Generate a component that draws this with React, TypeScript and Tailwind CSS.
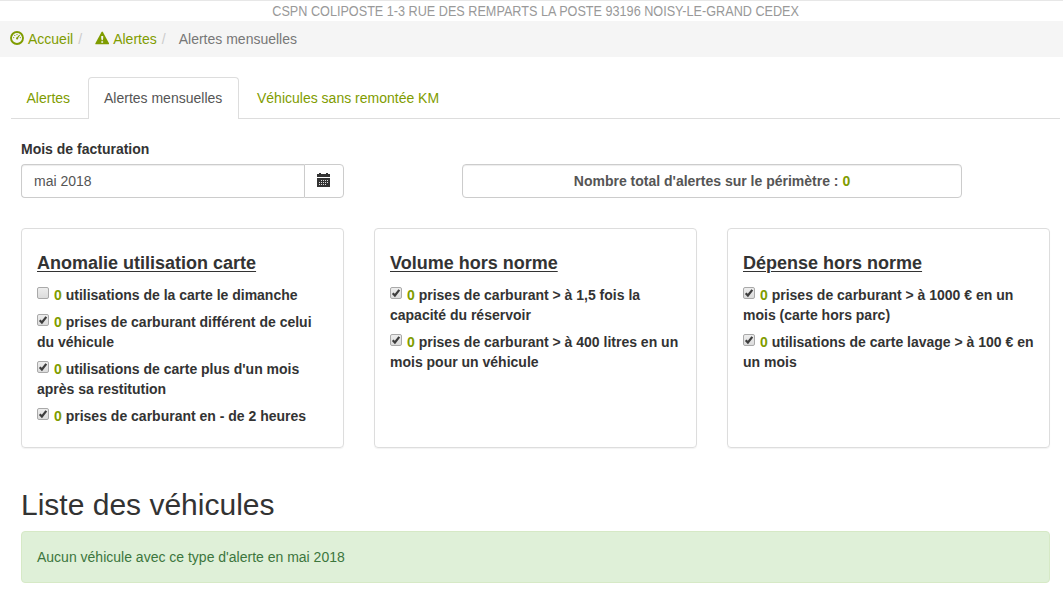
import { useState, type ReactNode } from "react";

type Alerte = { id: string; texte: string; coche: boolean };
type Groupe = { titre: string; alertes: Alerte[] };

const GROUPES: Groupe[] = [
  {
    titre: "Anomalie utilisation carte",
    alertes: [
      { id: "dimanche", texte: "utilisations de la carte le dimanche", coche: false },
      { id: "carburant", texte: "prises de carburant différent de celui du véhicule", coche: true },
      { id: "restitution", texte: "utilisations de carte plus d'un mois après sa restitution", coche: true },
      { id: "deux-heures", texte: "prises de carburant en - de 2 heures", coche: true },
    ],
  },
  {
    titre: "Volume hors norme",
    alertes: [
      { id: "reservoir", texte: "prises de carburant > à 1,5 fois la capacité du réservoir", coche: true },
      { id: "litres", texte: "prises de carburant > à 400 litres en un mois pour un véhicule", coche: true },
    ],
  },
  {
    titre: "Dépense hors norme",
    alertes: [
      { id: "hors-parc", texte: "prises de carburant > à 1000 € en un mois (carte hors parc)", coche: true },
      { id: "lavage", texte: "utilisations de carte lavage > à 100 € en un mois", coche: true },
    ],
  },
];

function DashboardIcon() {
  return (
    <svg width="14" height="14" viewBox="0 0 14 14" className="-mt-0.5 -ml-px shrink-0" aria-hidden="true">
      <circle cx="7" cy="7" r="6" fill="none" stroke="#7f9c00" strokeWidth="1.9" />
      <g fill="#7f9c00">
        <circle cx="3.7" cy="6.6" r=".6" />
        <circle cx="4.8" cy="4.4" r=".6" />
        <circle cx="7" cy="3.6" r=".6" />
        <circle cx="10.3" cy="6.6" r=".6" />
        <path d="M9.2 3.7l.9.6-2 2.6a1.1 1.1 0 1 1-1-.6z" />
      </g>
    </svg>
  );
}

function WarningIcon() {
  return (
    <svg width="14" height="14" viewBox="0 0 14 14" className="-mt-0.5 shrink-0" aria-hidden="true">
      <path d="M6.4 1.2Q7.2 0 8 1.2L14 12.2Q14.4 13.3 13.4 13.3H1Q0 13.3.4 12.2Z" fill="#7f9c00" />
      <path d="M6.2 5h2v2.2L7.7 9.2h-1L6.2 7.2zM6.3 10.2h1.8v1.6H6.3z" fill="#f5f5f5" />
    </svg>
  );
}

function CalendarIcon() {
  return (
    <svg width="14" height="14" viewBox="0 0 14 14" shapeRendering="crispEdges" aria-hidden="true">
      <path d="M0 1h2V0h2v1h5V0h2v1h2v3H0zM0 5h13v9H0z" fill="#333" />
      <path
        d="M4 7h1v1H4zM6 7h1v1H6zM8 7h1v1H8zM10 7h1v1h-1zM2 9h1v1H2zM4 9h1v1H4zM6 9h1v1H6zM8 9h1v1H8zM10 9h1v1h-1zM2 11h1v1H2zM4 11h1v1H4zM6 11h1v1H6zM8 11h1v1H8z"
        fill="#ddd"
      />
    </svg>
  );
}

function CheckBox({ checked, onChange }: { checked: boolean; onChange: () => void }) {
  return (
    <span className="mr-1 inline-grid h-[13px] w-[13px] align-[1px]">
      <input
        type="checkbox"
        checked={checked}
        onChange={onChange}
        className="col-start-1 row-start-1 m-0 h-3 w-3 appearance-none rounded-[2px] border border-[#a9a9a9] bg-linear-to-b from-[#ededed] to-[#dcdcdc]"
      />
      {checked && (
        <svg viewBox="0 0 12 12" className="pointer-events-none col-start-1 row-start-1 h-3 w-3" aria-hidden="true">
          <path d="M2.7 6.2L4.9 8.5L9.3 2.9" fill="none" stroke="#3d3d3d" strokeWidth="2.2" />
        </svg>
      )}
    </span>
  );
}

function Fil({ children, icon }: { children: ReactNode; icon: ReactNode }) {
  return (
    <a href="#" className="flex items-center gap-1 text-[#7f9c00]">
      {icon}
      {children}
    </a>
  );
}

export default function App() {
  const [coches, setCoches] = useState<Record<string, boolean>>(
    Object.fromEntries(GROUPES.flatMap((g) => g.alertes.map((a) => [a.id, a.coche]))),
  );

  return (
    <div className="h-[603px] overflow-hidden bg-white font-['Liberation_Sans',Arial,sans-serif] text-sm leading-5 text-[#333]">
      <header className="h-[21px] border-t border-[#e7e7e7] pl-2 text-center text-[#999]">
        <span className="inline-block scale-x-[0.903]">CSPN COLIPOSTE 1-3 RUE DES REMPARTS LA POSTE 93196 NOISY-LE-GRAND CEDEX</span>
      </header>
      <nav className="flex h-9 items-center bg-[#f5f5f5] pl-[11px]">
        <Fil icon={<DashboardIcon />}>Accueil</Fil>
        <span className="ml-[5px] w-[17px] text-[#ccc]">/</span>
        <Fil icon={<WarningIcon />}>Alertes</Fil>
        <span className="ml-[5px] w-[17px] text-[#ccc]">/</span>
        <span className="text-[#777]">Alertes mensuelles</span>
      </nav>

      <div className="mr-[3px] ml-[11px] flex h-[62px] items-end border-b border-[#ddd]">
        <a href="#" className="w-[75px] pt-[11px] pb-[10px] pl-[15.5px] text-[#7f9c00]">Alertes</a>
        <a href="#" className="-mb-px ml-0.5 w-[151px] rounded-t border border-b-0 border-[#ddd] bg-white px-[15px] pt-[10px] pb-[11px] text-[#555]">
          Alertes mensuelles
        </a>
        <a href="#" className="ml-0.5 px-4 pt-[11px] pb-[10px] text-[#7f9c00]">Véhicules sans remontée KM</a>
      </div>

      <main className="mr-[13px] ml-[21px]">
        <div className="mt-5 flex h-[59px] items-end">
          <div className="w-[323px]">
            <label htmlFor="mois" className="mb-[5px] block font-bold">Mois de facturation</label>
            <div className="flex h-[34px]">
              <input
                id="mois"
                defaultValue="mai 2018"
                className="w-[283px] rounded-l border border-r-0 border-[#ccc] px-3 text-[#555] shadow-[inset_0_1px_1px_rgba(0,0,0,0.075)]"
              />
              <button type="button" className="flex w-10 items-center rounded-r border border-[#ccc] pb-0.5 pl-3">
                <CalendarIcon />
              </button>
            </div>
          </div>
          <div className="ml-[118px] h-[34px] w-[500px] rounded border border-[#ccc] py-1.5 text-center font-bold text-[#555] shadow-[inset_0_1px_1px_rgba(0,0,0,0.075)]">
            Nombre total d'alertes sur le périmètre : <span className="text-[#7f9c00]">0</span>
          </div>
        </div>

        <div className="mt-[30px] grid h-[220px] grid-cols-3 gap-[30px]">
          {GROUPES.map((g) => (
            <section key={g.titre} className="rounded border border-[#ddd] p-[15px] font-bold shadow-[0_1px_1px_rgba(0,0,0,0.05)]">
              <h4 className="mt-[9px] mb-3 text-lg leading-5 underline decoration-1 underline-offset-2">{g.titre}</h4>
              <div className="flex flex-col gap-[7px]">
                {g.alertes.map((a) => (
                  <label key={a.id} className="block h-fit">
                    <CheckBox checked={coches[a.id]} onChange={() => setCoches({ ...coches, [a.id]: !coches[a.id] })} />
                    <span className="text-[#7f9c00]">0</span> {a.texte}
                  </label>
                ))}
              </div>
            </section>
          ))}
        </div>

        <h2 className="mt-10 mb-[10px] text-3xl leading-[33px]">Liste des véhicules</h2>
        <div className="rounded border border-[#d6e9c6] bg-[#dff0d8] p-[15px] text-[#3c763d]">
          Aucun véhicule avec ce type d'alerte en mai 2018
        </div>
      </main>
    </div>
  );
}
